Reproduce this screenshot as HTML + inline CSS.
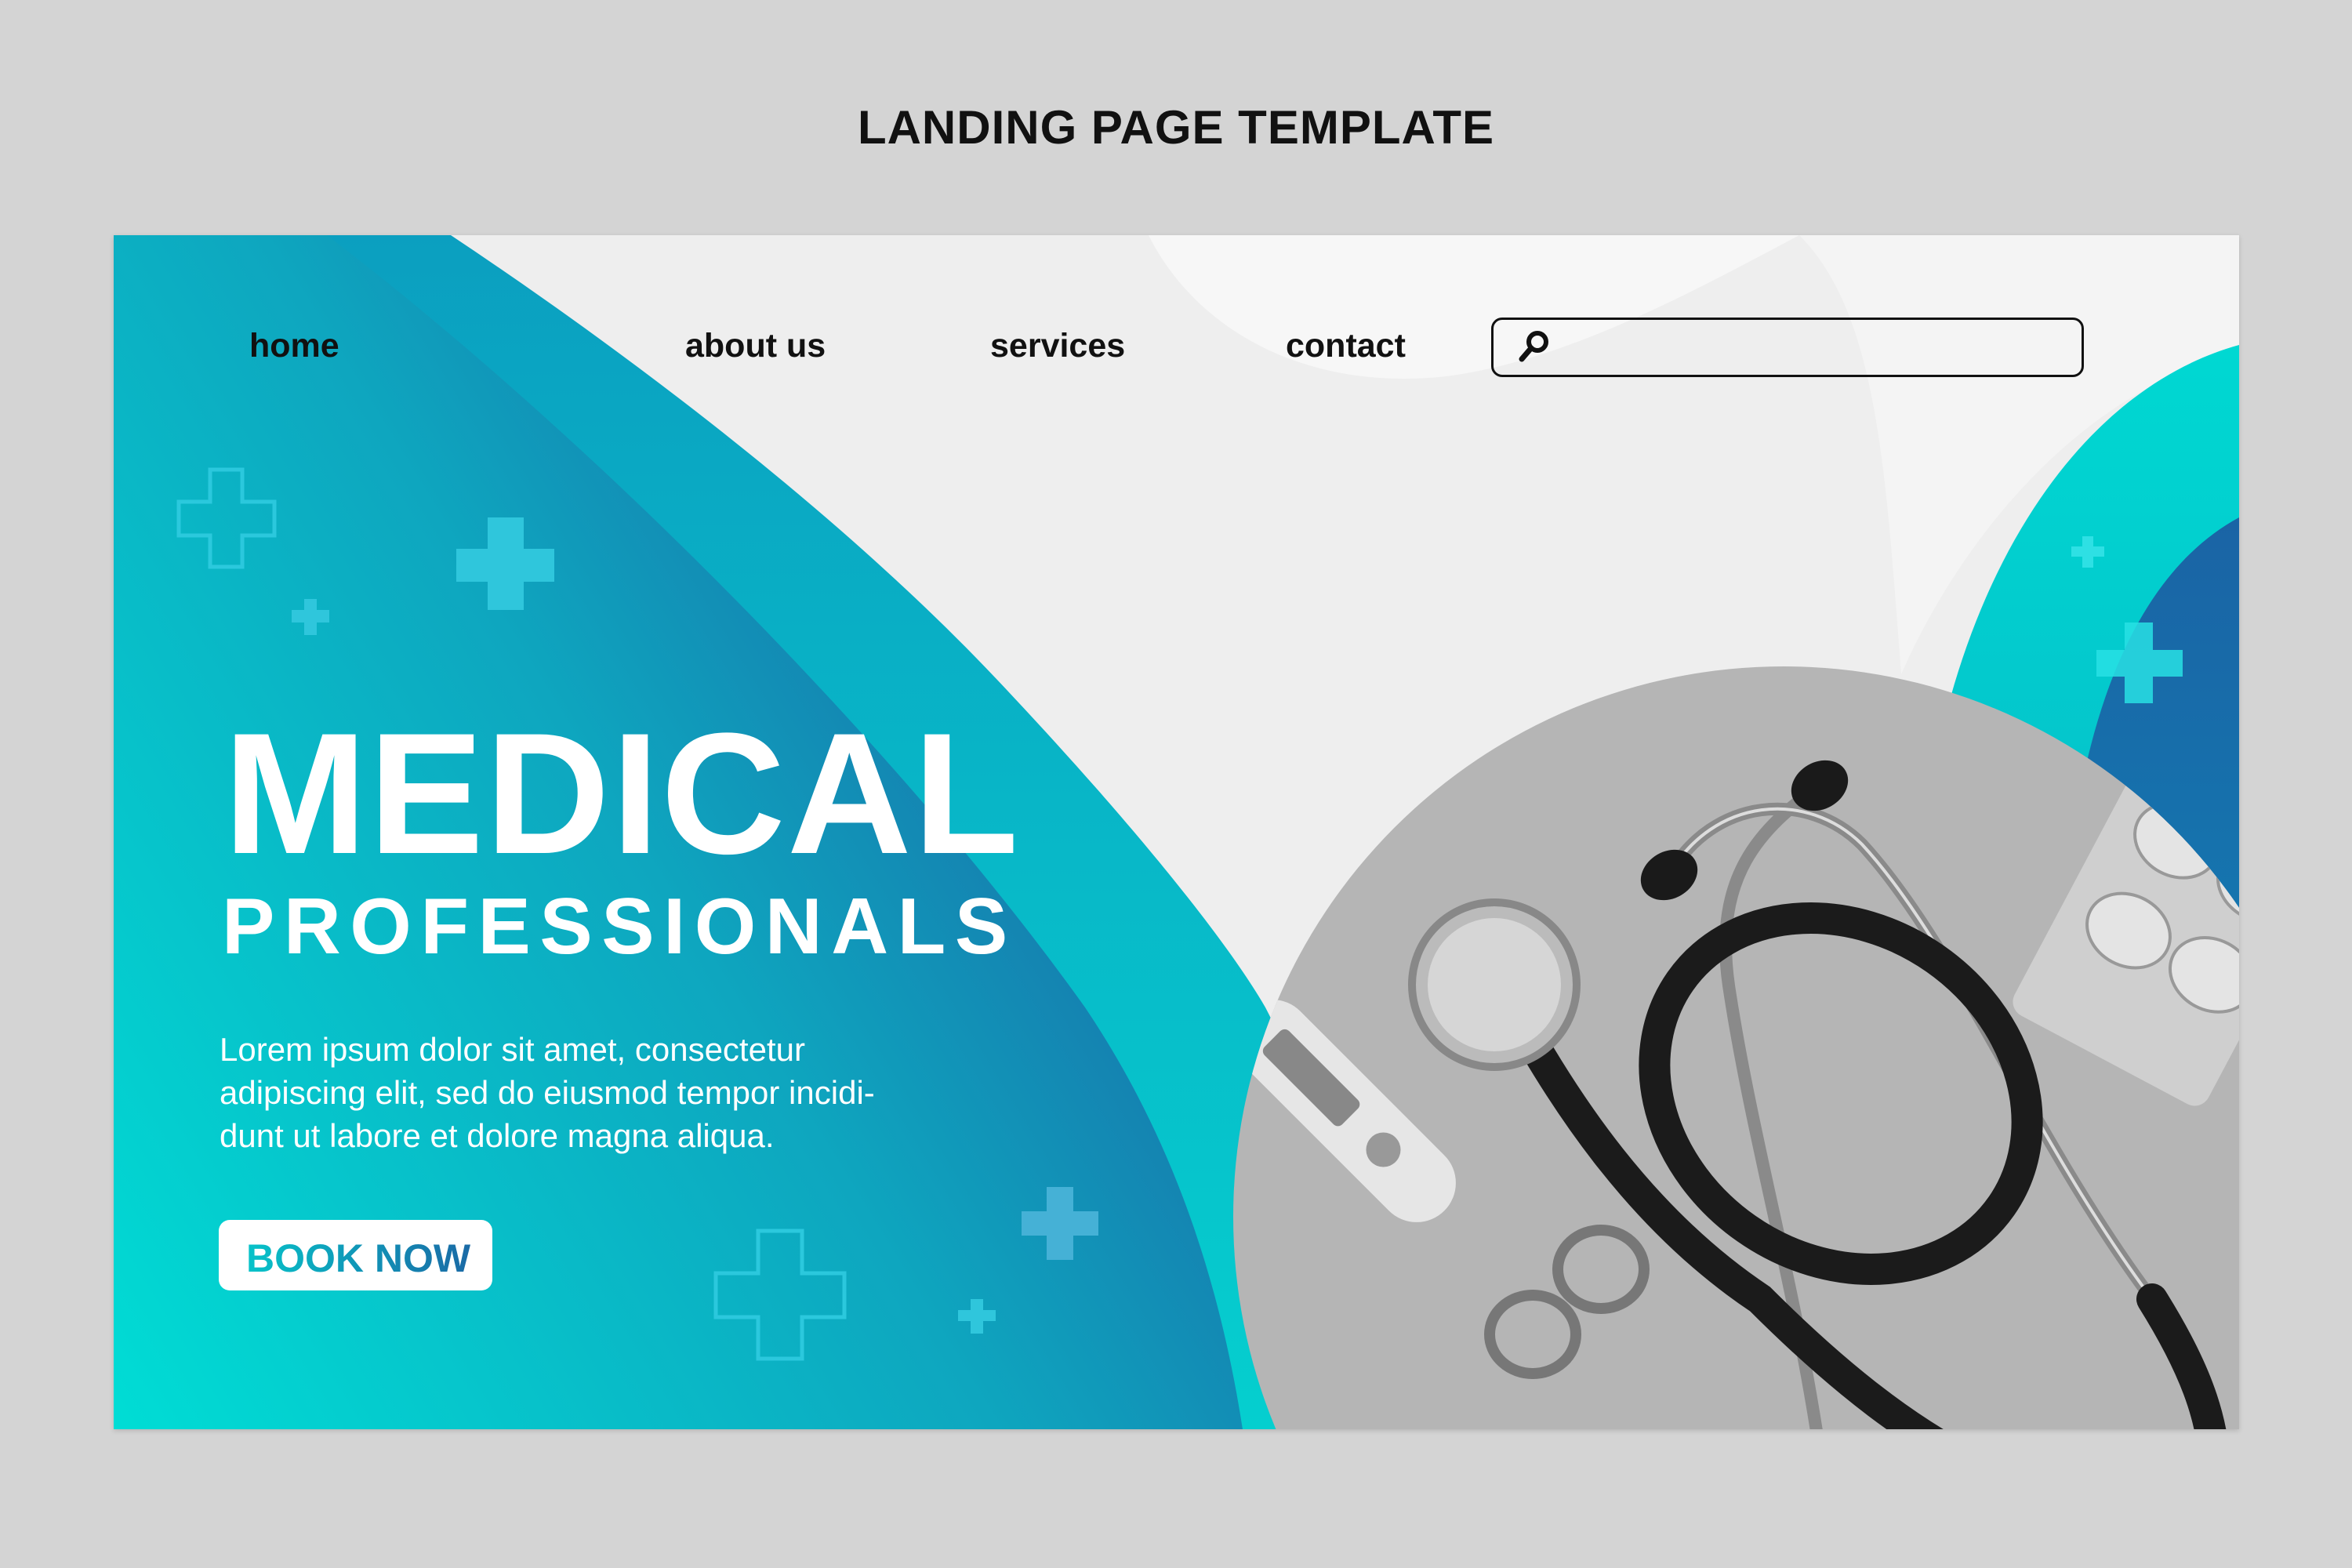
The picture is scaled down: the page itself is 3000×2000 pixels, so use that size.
<!DOCTYPE html>
<html><head><meta charset="utf-8"><style>
html,body{margin:0;padding:0}
body{width:3000px;height:2000px;background:#d4d4d4;position:relative;overflow:hidden;font-family:"Liberation Sans",sans-serif}
.title{position:absolute;left:0;width:3000px;top:128px;text-align:center;font-weight:bold;font-size:60px;letter-spacing:1px;color:#111}
.card{position:absolute;left:145px;top:300px;width:2711px;height:1523px;overflow:hidden;background:#eeeeee;box-shadow:0 2px 6px rgba(0,0,0,.15)}
.card svg{position:absolute;left:0;top:0}
.nav{position:absolute;top:117px;font-size:43px;font-weight:bold;color:#111}
.search{position:absolute;left:1757px;top:105px;width:756px;height:76px;border:3px solid #111;border-radius:14px;box-sizing:border-box}
.h1{position:absolute;left:140px;top:602px;font-size:220px;font-weight:bold;color:#fff;line-height:1;letter-spacing:2px}
.h2{position:absolute;left:138px;top:832px;font-size:101px;font-weight:bold;color:#fff;line-height:1;letter-spacing:11.5px}
.p{position:absolute;left:135px;top:1011px;font-size:42px;line-height:55px;color:#fff}
.btn{position:absolute;left:134px;top:1256px;width:349px;height:90px;background:#fff;border-radius:14px}
.btn span{position:absolute;left:35px;top:20px;font-size:50px;font-weight:bold;background:linear-gradient(90deg,#07c3c9,#1a6aa6);-webkit-background-clip:text;background-clip:text;color:transparent}
</style></head><body>
<div class="title">LANDING PAGE TEMPLATE</div>
<div class="card">
<svg width="2711" height="1523" viewBox="0 0 2711 1523">
<defs>
<linearGradient id="gl" x1="0" y1="1" x2="1" y2="0.35"><stop offset="0" stop-color="#00ddd5"/><stop offset="0.55" stop-color="#0ea6bf"/><stop offset="1" stop-color="#1b5fa3"/></linearGradient>
<linearGradient id="gb" x1="0" y1="0" x2="0" y2="1"><stop offset="0" stop-color="#0b9fc0"/><stop offset="1" stop-color="#05cfcf"/></linearGradient>
<linearGradient id="gr" x1="0" y1="0" x2="0" y2="1"><stop offset="0" stop-color="#00d8d2"/><stop offset="1" stop-color="#0aa9c2"/></linearGradient>
<linearGradient id="gd" x1="0" y1="0" x2="0" y2="1"><stop offset="0" stop-color="#1a64a5"/><stop offset="1" stop-color="#0e8bbb"/></linearGradient>
<clipPath id="cc"><circle cx="2130" cy="1252" r="702"/></clipPath>
</defs>
<path d="M1320 0 C1380 120 1520 200 1700 180 C1850 160 2000 80 2150 0 Z" fill="#f7f7f7"/>
<path d="M2150 0 H2711 V150 C2500 200 2350 400 2280 560 C2260 300 2250 100 2150 0Z" fill="#f4f4f4"/>
<path d="M0 0 H430 C700 180 950 380 1124 564 C1300 750 1420 900 1469 985 C1530 1100 1560 1300 1580 1523 H0Z" fill="url(#gb)"/>
<path d="M0 0 H272 C600 250 1000 650 1239 985 C1350 1150 1410 1330 1440 1523 H0Z" fill="url(#gl)"/>
<path d="M2711 140 C2530 190 2390 380 2330 640 L2330 1523 L2711 1523Z" fill="url(#gr)"/>
<path d="M2711 360 C2600 420 2530 560 2500 760 L2500 1523 L2711 1523Z" fill="url(#gd)"/>
<g fill="none" stroke="#2fcbe0" stroke-width="5" opacity="0.9">
<path d="M107 289 h41 v41 h41 v43 h-41 v40 h-41 v-40 h-40 v-43 h40z" transform="translate(16 10)"/>
<path d="M822 1236 h56 v54 h54 v56 h-54 v53 h-56 v-53 h-54 v-56 h54z" transform="translate(0 34)"/>
</g>
<g fill="#2fc6dc">
<path d="M478 352 h46 v40 h39 v42 h-39 v36 h-46 v-36 h-40 v-42 h40z" transform="translate(-1 8)"/>
<path d="M238 456 h16 v14 h16 v16 h-16 v16 h-16 v-16 h-16 v-16 h16z" transform="translate(5 8)"/>
<path d="M1087 1223 h16 v14 h16 v14 h-16 v16 h-16 v-16 h-16 v-14 h16z" transform="translate(6 134)"/>
</g>
<path d="M1178 1181 h34 v31 h32 v31 h-32 v31 h-34 v-31 h-32 v-31 h32z" fill="#45b1d6" transform="translate(12 33)"/>
<path d="M2517 340 h14 v13 h14 v13 h-14 v14 h-14 v-14 h-14 v-13 h14z" fill="#2ee0e4" transform="translate(-6 44)"/>
<path d="M2563 436 h36 v35 h38 v34 h-38 v34 h-36 v-34 h-36 v-34 h36z" fill="#28e0e4" opacity="0.85" transform="translate(2 58)"/>
<g clip-path="url(#cc)">
<rect x="1400" y="480" width="1400" height="1100" fill="#b5b5b5"/>
<g transform="translate(0 57)">
<g transform="rotate(28 2610 840)"><rect x="2480" y="650" width="280" height="360" rx="20" fill="#cfcfcf"/>
<ellipse cx="2570" cy="720" rx="55" ry="45" fill="#e4e4e4" stroke="#999" stroke-width="4"/><ellipse cx="2570" cy="850" rx="55" ry="45" fill="#e4e4e4" stroke="#999" stroke-width="4"/><ellipse cx="2690" cy="720" rx="55" ry="45" fill="#e4e4e4" stroke="#999" stroke-width="4"/><ellipse cx="2690" cy="850" rx="55" ry="45" fill="#e4e4e4" stroke="#999" stroke-width="4"/></g>
<g transform="rotate(45 1570 1060)"><rect x="1390" y="1010" width="360" height="100" rx="50" fill="#e6e6e6"/><rect x="1440" y="1038" width="140" height="44" rx="8" fill="#888"/><circle cx="1640" cy="1060" r="22" fill="#999"/><rect x="1300" y="1040" width="100" height="40" fill="#ccc"/></g>
<g fill="none" stroke="#777" stroke-width="14"><ellipse cx="1897" cy="1262" rx="55" ry="50"/><ellipse cx="1810" cy="1345" rx="55" ry="50"/></g>
<g fill="none" stroke="#8a8a8a" stroke-width="16" stroke-linecap="round">
<path d="M1984 759 C2040 660 2160 650 2230 720 C2350 850 2450 1100 2600 1300 L2700 1520"/>
<path d="M2176 645 C2100 700 2040 760 2060 900 C2090 1100 2150 1300 2180 1523"/>
</g>
<g fill="none" stroke="#ddd" stroke-width="4"><path d="M1984 759 C2040 660 2160 650 2230 720 C2350 850 2450 1100 2600 1300 L2700 1520"/></g>
<ellipse cx="1984" cy="759" rx="38" ry="30" fill="#1a1a1a" transform="rotate(-30 1984 759)"/>
<ellipse cx="2176" cy="645" rx="38" ry="30" fill="#1a1a1a" transform="rotate(-30 2176 645)"/>
<g fill="none" stroke="#1b1b1b" stroke-width="40" stroke-linecap="round">
<ellipse cx="2203" cy="1038" rx="250" ry="210" transform="rotate(35 2203 1038)"/>
<path d="M1780 920 C1850 1050 1950 1200 2100 1300 C2200 1400 2300 1480 2400 1523"/>
<path d="M2600 1300 C2650 1380 2680 1450 2680 1523"/>
</g>
<circle cx="1761" cy="899" r="105" fill="#bbb" stroke="#888" stroke-width="10"/>
<circle cx="1761" cy="899" r="85" fill="#d6d6d6"/>
</g>
</g>
<g transform="translate(1790 122)"><circle cx="26" cy="14" r="11" fill="none" stroke="#111" stroke-width="6"/><path d="M18 22 L6 36" stroke="#111" stroke-width="7" stroke-linecap="round"/></g>
</svg>
<div class="nav" style="left:173px">home</div>
<div class="nav" style="left:729px">about us</div>
<div class="nav" style="left:1118px">services</div>
<div class="nav" style="left:1495px">contact</div>
<div class="search"></div>
<div class="h1">MEDICAL</div>
<div class="h2">PROFESSIONALS</div>
<div class="p">Lorem ipsum dolor sit amet, consectetur<br>adipiscing elit, sed do eiusmod tempor incidi-<br>dunt ut labore et dolore magna aliqua.</div>
<div class="btn"><span>BOOK NOW</span></div>
</div>
</body></html>
